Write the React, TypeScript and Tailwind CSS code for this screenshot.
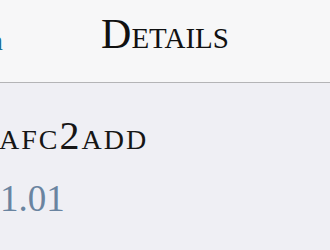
export default function App() {
  return (
    <div className="w-[330px] h-[250px] overflow-hidden bg-[#efeff4] font-['Liberation_Serif',serif]">
      <header className="grid grid-cols-[1fr_auto_1fr] items-end h-[83px] bg-[#f7f7f8] border-b border-[#b4b4b6] pb-[27px]">
        <span className="-ml-[11px] text-[28px] leading-none text-[#1f6f92]">n</span>
        <h1 className="text-[42px] leading-none text-[#111] [font-variant-caps:small-caps]">Details</h1>
        <span />
      </header>
      <div className="flex flex-col pt-[33px]">
        <div className="-ml-[1px] text-[40px] leading-none tracking-[2px] text-[#161616] [font-variant-caps:small-caps]">afc2add</div>
        <div className="mt-[24px] text-[37px] leading-none text-[#6a84a0]">1.01</div>
      </div>
    </div>
  );
}
